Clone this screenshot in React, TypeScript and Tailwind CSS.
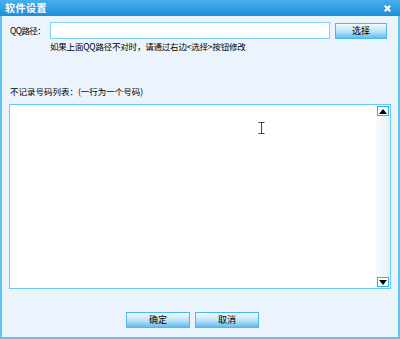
import React from "react";

const font = { fontFamily: '"SimSun", "Noto Sans CJK SC", "Liberation Sans", sans-serif' };

const DlgButton = ({ label, className = "" }: { label: string; className?: string }) => (
  <button
    className={`h-[16px] border border-[#4fb8ec] bg-gradient-to-b from-[#f4fbff] via-[#bfe4f8] to-[#5fbdef] text-[9px] leading-[14px] text-black ${className}`}
  >
    {label}
  </button>
);

const Arrow = ({ up }: { up?: boolean }) => (
  <div className="w-[12px] h-[10px] border border-[#36b0ea] bg-white flex items-center justify-center">
    <svg width="8" height="5" viewBox="0 0 8 5">
      {up ? <path d="M4 0 L8 5 L0 5 Z" fill="#000" /> : <path d="M0 0 L8 0 L4 5 Z" fill="#000" />}
    </svg>
  </div>
);

export default function App() {
  return (
    <div className="w-[400px] h-[339px] flex flex-col bg-[#ebf4fd] text-black" style={font}>
      {/* title bar */}
      <div className="h-[16px] shrink-0 flex items-center justify-between pl-[5px] pr-[9px] bg-gradient-to-b from-[#45b0ec] to-[#1b8fd9]">
        <span className="text-white font-bold text-[10px] leading-[12px] tracking-[0.5px]">软件设置</span>
        <svg width="7" height="7" viewBox="0 0 7 7">
          <path d="M0.8 0.8 L6.2 6.2 M6.2 0.8 L0.8 6.2" stroke="#fff" strokeWidth="2" />
        </svg>
      </div>

      <div className="flex-1 flex flex-col border-x-2 border-b-2 border-[#5cc5f4] pl-[7px] pr-[6px]">
        {/* path row */}
        <div className="flex items-center mt-[6px] h-[17px]">
          <span className="w-[41px] pl-[1px] text-[8.5px] tracking-[-0.6px] whitespace-nowrap">QQ路径：</span>
          <div className="w-[280px] h-[17px] bg-white border border-[#7fd2f7]" />
          <DlgButton label="选择" className="ml-[5px] w-[52px]" />
        </div>
        <div className="ml-[41px] mt-[2px] text-[8.5px] leading-[11px] tracking-[-0.2px] whitespace-nowrap">
          如果上面QQ路径不对时，请通过右边&lt;选择&gt;按钮修改
        </div>

        <div className="mt-[34px] pl-[1px] text-[8.5px] leading-[11px] whitespace-nowrap">
          不记录号码列表：(一行为一个号码)
        </div>

        {/* textarea */}
        <div className="mt-[7px] w-[382px] h-[185px] bg-white border border-[#6ccbf6] flex justify-end relative">
          <div className="w-[14px] h-full flex flex-col items-center justify-between py-[1px] bg-gradient-to-r from-[#f7fbfe] to-[#e6f1f8]">
            <Arrow up />
            <Arrow />
          </div>
          <svg className="absolute left-[248px] top-[17px]" width="7" height="12" viewBox="0 0 7 12">
            <path d="M0.5 0.5 H6.5 M3.5 0.5 V11.5 M0.5 11.5 H6.5" stroke="#444" strokeWidth="1" fill="none" />
          </svg>
        </div>

        {/* bottom buttons */}
        <div className="flex mt-[23px] ml-[117px] gap-[5px]">
          <DlgButton label="确定" className="w-[64px]" />
          <DlgButton label="取消" className="w-[64px]" />
        </div>
      </div>
    </div>
  );
}
